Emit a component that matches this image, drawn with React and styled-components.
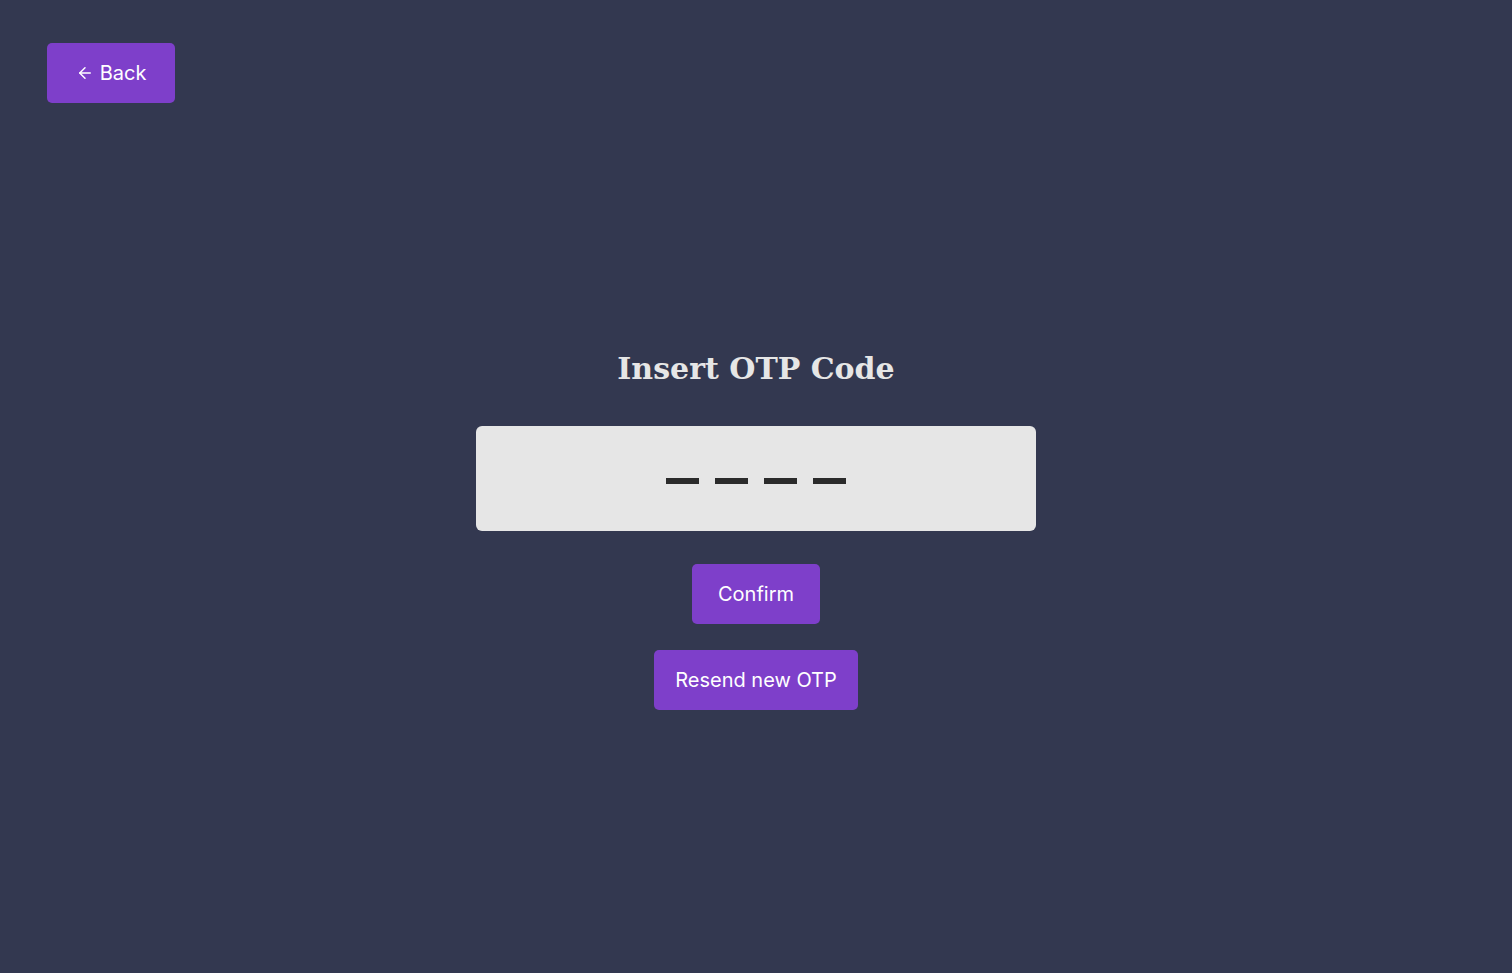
import styled, { createGlobalStyle } from "styled-components";
import { ArrowLeft } from "lucide-react";

const GlobalStyle = createGlobalStyle`
  html, body {
    margin: 0;
    padding: 0;
    background: #333850;
  }
  * {
    box-sizing: border-box;
  }
`;

const Page = styled.div`
  min-height: 100vh;
  background: #333850;
  padding: 43px 47px;
  font-family: Inter, "Noto Sans", sans-serif;
`;

const Button = styled.button`
  display: inline-flex;
  align-items: center;
  justify-content: center;
  gap: 6px;
  height: 60px;
  width: ${(p) => p.$width}px;
  background: #7e3fca;
  color: #fff;
  border: none;
  border-radius: 5px;
  font-family: Inter, "Noto Sans", sans-serif;
  font-size: 20px;
  cursor: pointer;
  padding: 0;

  &:hover {
    background: #7136b8;
  }
`;

const Main = styled.main`
  display: flex;
  flex-direction: column;
  align-items: center;
  margin-top: 247px;
`;

const Title = styled.h1`
  margin: 0;
  font-family: "DejaVu Serif", "Liberation Serif", serif;
  font-weight: bold;
  font-size: 30px;
  line-height: 38px;
  color: #e6e6e6;
`;

const CodeBox = styled.div`
  margin-top: 38px;
  width: 560px;
  height: 105px;
  background: #e6e6e6;
  border-radius: 6px;
  display: flex;
  align-items: center;
  justify-content: center;
  gap: 16px;
  padding-top: 5px;
`;

const Dash = styled.span`
  width: 33px;
  height: 6px;
  background: #2b2b2b;
`;

const Actions = styled.div`
  display: flex;
  flex-direction: column;
  align-items: center;
  gap: 26px;
  margin-top: 33px;
`;

export default function App() {
  return (
    <Page>
      <GlobalStyle />
      <Button $width={128}>
        <ArrowLeft size={18} strokeWidth={2} />
        Back
      </Button>
      <Main>
        <Title>Insert OTP Code</Title>
        <CodeBox>
          {[0, 1, 2, 3].map((i) => (
            <Dash key={i} />
          ))}
        </CodeBox>
        <Actions>
          <Button $width={128}>Confirm</Button>
          <Button $width={204}>Resend new OTP</Button>
        </Actions>
      </Main>
    </Page>
  );
}
